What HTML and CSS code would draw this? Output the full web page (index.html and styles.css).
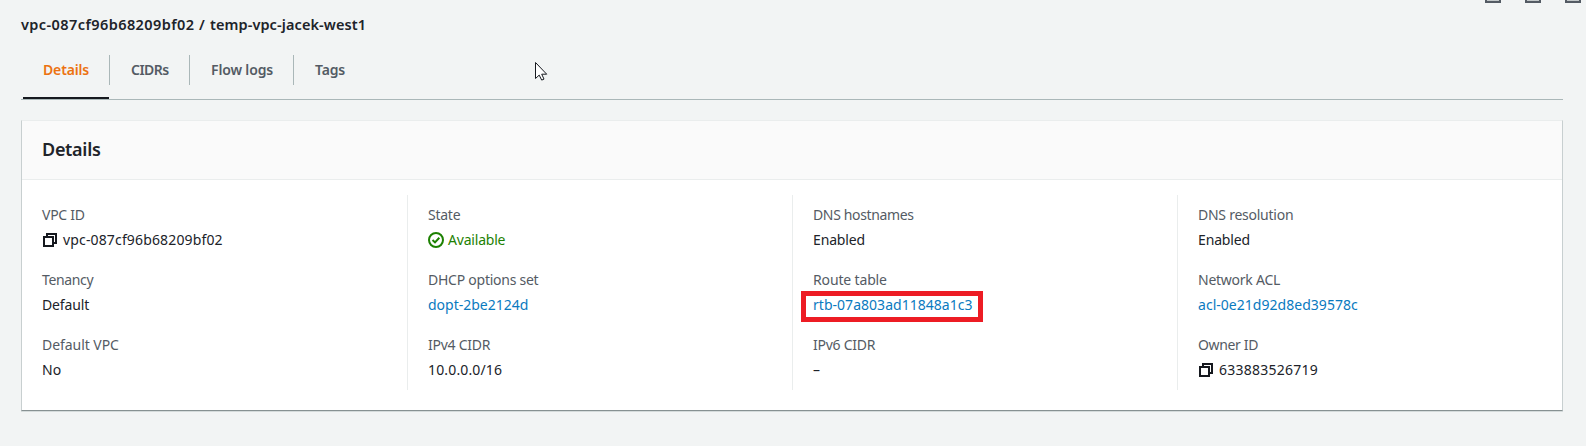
FILE: index.html
```html
<!DOCTYPE html>
<html lang="en">
<head>
<meta charset="utf-8">
<title>VPC details</title>
<link rel="stylesheet" href="styles.css">
</head>
<body>
<div class="pane-grips">
  <span class="grip"></span><span class="grip"></span><span class="grip"></span>
</div>
<h1 class="title"><span class="title-id">vpc-087cf96b68209bf02</span> / <span class="title-name">temp-vpc-jacek-west1</span></h1>
<nav class="tabs">
  <a class="tab tab-active">Details</a>
  <a class="tab tab-cidrs">CIDRs</a>
  <a class="tab tab-flow">Flow logs</a>
  <a class="tab tab-tags">Tags</a>
</nav>
<section class="panel">
  <header class="panel-header"><h2 class="panel-title">Details</h2></header>
  <div class="columns">
    <dl class="column">
      <dt>VPC ID</dt>
      <dd class="id"><svg class="copy" viewBox="0 0 16 16"><path d="M2 5h9v9H2zM5 5V2h9v9h-3"/></svg><span>vpc-087cf96b68209bf02</span></dd>
      <dt class="tight">Tenancy</dt>
      <dd class="word">Default</dd>
      <dt class="loose">Default VPC</dt>
      <dd>No</dd>
    </dl>
    <dl class="column">
      <dt>State</dt>
      <dd class="available"><svg class="check" viewBox="0 0 16 16"><circle cx="8" cy="8" r="7"/><path d="M4.5 8l2.5 2.4 4.3-4.6"/></svg><span>Available</span></dd>
      <dt>DHCP options set</dt>
      <dd><a class="link dopt">dopt-2be2124d</a></dd>
      <dt>IPv4 CIDR</dt>
      <dd class="id">10.0.0.0/16</dd>
    </dl>
    <dl class="column">
      <dt class="tight">DNS hostnames</dt>
      <dd class="word">Enabled</dd>
      <dt class="word">Route table</dt>
      <dd class="marked"><a class="link">rtb-07a803ad11848a1c3</a></dd>
      <dt>IPv6 CIDR</dt>
      <dd>–</dd>
    </dl>
    <dl class="column">
      <dt>DNS resolution</dt>
      <dd class="word">Enabled</dd>
      <dt>Network ACL</dt>
      <dd><a class="link">acl-0e21d92d8ed39578c</a></dd>
      <dt class="tight">Owner ID</dt>
      <dd class="id owner"><svg class="copy" viewBox="0 0 16 16"><path d="M2 5h9v9H2zM5 5V2h9v9h-3"/></svg><span>633883526719</span></dd>
    </dl>
  </div>
</section>
<svg class="cursor" viewBox="0 0 13 20"><path d="M.5.5v16l3.7-3.4 2.5 5 2.3-1-2.3-4.9h5z"/></svg>
</body>
</html>
```
FILE: styles.css
```css
*, *::after { box-sizing: border-box; }
body {
  margin: 0;
  height: 446px;
  padding: 13px 23px 0 21px;
  overflow: hidden;
  background: #f2f4f4;
  color: #202329;
  font: 14px/22px "Noto Sans", sans-serif;
}
.pane-grips {
  position: absolute;
  top: 0;
  left: 1485px;
  display: flex;
  gap: 24px;
}
.grip {
  width: 16px;
  height: 3px;
  border: 2px solid #545b64;
  border-top: 0;
  background: #c3c8c9;
}
.title {
  margin: 0;
  font-size: 14.5px;
  font-weight: 600;
  line-height: 22px;
  letter-spacing: 0.7px;
}
.title-id { letter-spacing: 0.42px; }
.title-name { letter-spacing: 0.1px; }
.tabs {
  display: flex;
  align-items: flex-start;
  height: 65px;
  padding: 20px 0 0 2px;
  border-bottom: 1px solid #aab7b8;
}
.tab {
  height: 30px;
  padding-left: 21px;
  border-left: 1px solid #aab7b8;
  color: #545b64;
  font-weight: 600;
  line-height: 30px;
  white-space: nowrap;
  letter-spacing: -0.15px;
}
.tab-active {
  width: 86px;
  height: 44px;
  padding-left: 20px;
  border-left: 0;
  border-bottom: 2px solid #16191f;
  color: #ec7211;
}
.tab-cidrs { width: 80px; letter-spacing: -0.5px; }
.tab-flow { width: 104px; }
.panel {
  height: 291px;
  margin-top: 20px;
  border: 1px solid #c8cfd0;
  border-top-color: #eaeded;
  border-bottom-color: #879192;
  background: #fff;
  box-shadow: 0 1px 0 #d5dbdb;
}
.panel-header {
  height: 59px;
  padding: 13px 20px;
  border-bottom: 1px solid #eaeded;
  background: #fafafa;
}
.panel-title {
  margin: 0;
  font-size: 18px;
  font-weight: 600;
  line-height: 30px;
  letter-spacing: -0.3px;
}
.columns {
  display: grid;
  grid-template-columns: 386px 385px 385px 1fr;
  grid-template-rows: 195px;
  margin-top: 15px;
}
.column {
  margin: 0;
  padding: 9px 0 0 20px;
  border-right: 1px solid #eaeded;
}
.column:last-child { border-right: 0; }
dt {
  height: 25px;
  color: #545b64;
  letter-spacing: -0.25px;
}
dd {
  display: flex;
  align-items: center;
  height: 22px;
  margin: 0 0 18px;
}
dd:last-child { margin-bottom: 0; }
.word { letter-spacing: -0.15px; }
.tight { letter-spacing: -0.35px; }
.loose { letter-spacing: -0.05px; }
.id { letter-spacing: 0.15px; }
.owner { letter-spacing: 0.25px; }
.link { color: #0a7ac0; letter-spacing: 0.03px; }
.dopt { letter-spacing: 0; }
.copy {
  width: 16px;
  height: 16px;
  margin-right: 5px;
  fill: none;
  stroke: #16191f;
  stroke-width: 2;
}
.available { color: #1d8102; letter-spacing: -0.2px; }
.check {
  width: 16px;
  height: 16px;
  margin-right: 4px;
  fill: none;
  stroke: #1d8102;
  stroke-width: 2;
}
.marked { position: relative; }
.marked::after {
  content: "";
  position: absolute;
  top: -3px;
  left: -12px;
  width: 182px;
  height: 31px;
  border: 5px solid #ed1c24;
}
.cursor {
  position: absolute;
  top: 62px;
  left: 535px;
  width: 13px;
  height: 20px;
  fill: #fff;
  stroke: #16191f;
}
```
